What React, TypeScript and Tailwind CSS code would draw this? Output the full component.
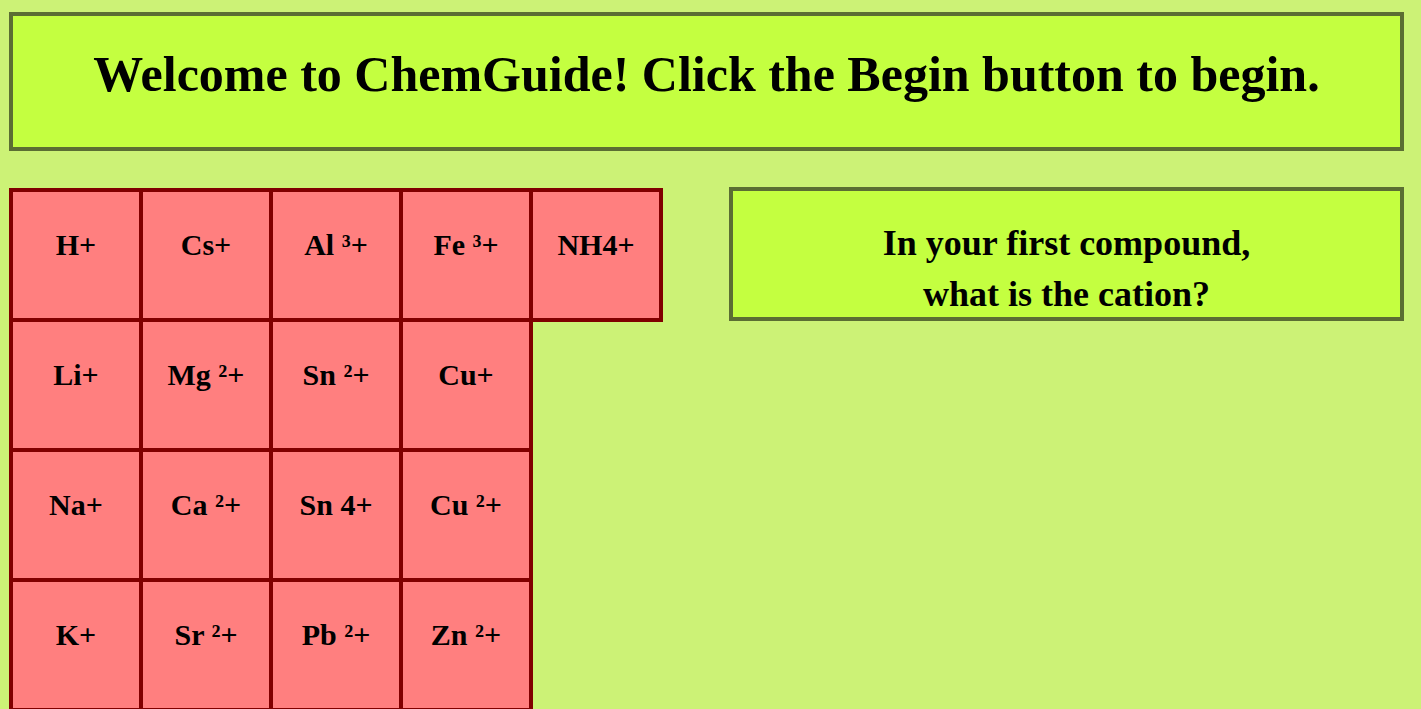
const rows: string[][] = [
  ["H+", "Cs+", "Al ³+", "Fe ³+", "NH4+"],
  ["Li+", "Mg ²+", "Sn ²+", "Cu+"],
  ["Na+", "Ca ²+", "Sn 4+", "Cu ²+"],
  ["K+", "Sr ²+", "Pb ²+", "Zn ²+"],
];

export default function App() {
  return (
    <div className="min-h-screen bg-[#ccf276] pt-[12px] pl-[9px] pr-[17px] font-['Liberation_Serif','DejaVu_Serif',serif] text-black">
      {/* Banner */}
      <div className="h-[139px] border-4 border-[#5b6e33] bg-[#c4ff40] pt-[31px] text-center">
        <h1 className="text-[50px] leading-[55px] font-bold">
          Welcome to ChemGuide! Click the Begin button to begin.
        </h1>
      </div>

      <div className="mt-[36px] flex items-start justify-between">
        {/* Cation table */}
        <table className="border-collapse mt-[1px]">
          <tbody>
            {rows.map((row, i) => (
              <tr key={i}>
                {row.map((ion) => (
                  <td key={ion} className="border-4 border-[#800000] bg-[#ff7f7f] p-0 align-top">
                    <div className="w-[126px] h-[126px] pt-[36px] text-center text-[30px] leading-[33px] font-bold">
                      {ion}
                    </div>
                  </td>
                ))}
              </tr>
            ))}
          </tbody>
        </table>

        {/* Prompt */}
        <div className="w-[675px] h-[134px] border-4 border-[#5b6e33] bg-[#c4ff40] pt-[27px] text-center">
          <h2 className="text-[36px] leading-[51px] font-bold">
            In your first compound,
            <br />
            what is the cation?
          </h2>
        </div>
      </div>
    </div>
  );
}
